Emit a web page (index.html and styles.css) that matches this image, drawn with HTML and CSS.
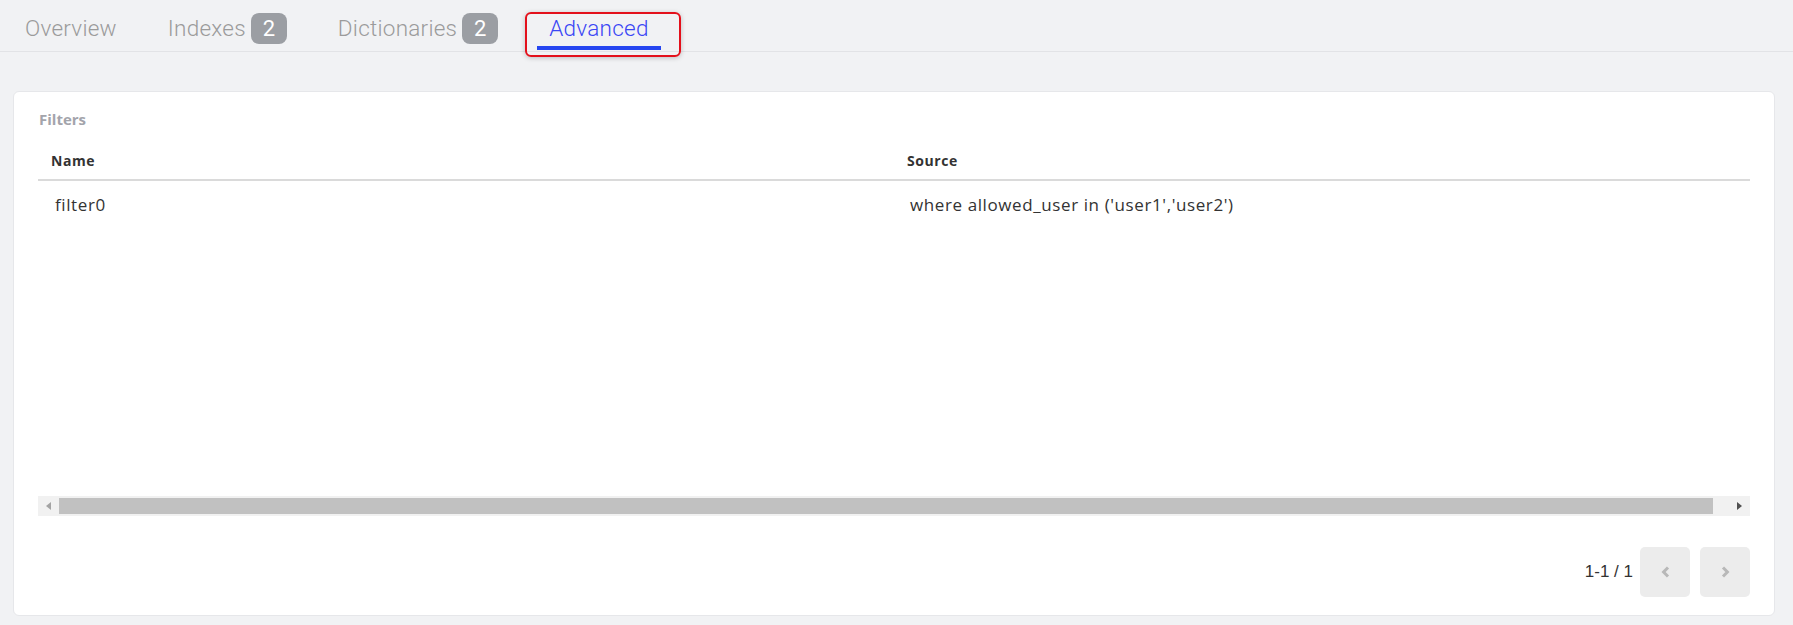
FILE: index.html
```html
<!DOCTYPE html>
<html lang="en">
<head>
<meta charset="utf-8">
<title>Advanced</title>
<link rel="stylesheet" href="styles.css">
</head>
<body>
<nav class="tabs">
  <div class="tab">Overview</div>
  <div class="tab">Indexes<span class="badge">2</span></div>
  <div class="tab">Dictionaries<span class="badge">2</span></div>
  <div class="tab active">Advanced<span class="highlight"></span></div>
</nav>
<main class="content">
  <section class="card">
    <div class="card-title">Filters</div>
    <div class="table-wrap">
      <table class="grid">
        <thead>
          <tr><th>Name</th><th>Source</th></tr>
        </thead>
        <tbody>
          <tr><td>filter0</td><td>where allowed_user in ('user1','user2')</td></tr>
        </tbody>
      </table>
    </div>
    <div class="hscroll">
      <div class="sb-btn"><span class="tri-left"></span></div>
      <div class="sb-track"><div class="sb-thumb"></div></div>
      <div class="sb-btn"><span class="tri-right"></span></div>
    </div>
    <div class="pager">
      <span class="pager-info">1-1 / 1</span>
      <button class="pager-btn" aria-label="Previous">
        <svg width="9" height="12" viewBox="0 0 9 12"><path d="M7 1.5 L2.6 6 L7 10.5" fill="none" stroke="#b8b8b8" stroke-width="3"/></svg>
      </button>
      <button class="pager-btn" aria-label="Next">
        <svg width="9" height="12" viewBox="0 0 9 12"><path d="M2 1.5 L6.4 6 L2 10.5" fill="none" stroke="#b8b8b8" stroke-width="3"/></svg>
      </button>
    </div>
  </section>
</main>
</body>
</html>
```

FILE: styles.css
```css
html, body {
  margin: 0;
  padding: 0;
  background: #f1f2f4;
  height: 100%;
  overflow: hidden;
}

body {
  font-family: "Open Sans", "Noto Sans", sans-serif;
  color: #333;
}

.tabs {
  display: flex;
  gap: 27px;
  padding: 0 0 0 13px;
  border-bottom: 1px solid #e2e3e6;
  height: 51px;
}

.tab {
  position: relative;
  display: flex;
  align-items: center;
  height: 25px;
  padding: 16px 12px 5px;
  border-bottom: 4px solid transparent;
  margin-bottom: 1px;
  font-family: Roboto, "Liberation Sans", sans-serif;
  font-weight: 300;
  font-size: 22.5px;
  letter-spacing: 0.25px;
  line-height: 25px;
  color: #9b9b9b;
  white-space: nowrap;
}

.tab.active {
  color: #3a46f5;
  border-bottom-color: #2546f0;
}

.badge {
  flex: none;
  display: flex;
  align-items: center;
  justify-content: center;
  width: 36px;
  height: 31px;
  margin-left: 5px;
  border-radius: 8px;
  background: #9b9ea3;
  color: #fff;
  font-size: 22px;
  font-weight: 400;
  letter-spacing: 0;
}

.highlight {
  position: absolute;
  left: -12px;
  right: -20px;
  top: 12px;
  bottom: -11px;
  border: 2px solid #e3101b;
  border-radius: 6px;
  box-shadow: 0 1px 5px rgba(0, 0, 0, 0.22);
  pointer-events: none;
}

.content {
  padding: 39px 18px 0 13px;
}

.card {
  background: #fff;
  border: 1px solid #e6e7ea;
  border-radius: 6px;
  padding: 19px 24px 18px;
}

.card-title {
  font-size: 15px;
  line-height: 16px;
  font-weight: 700;
  color: #a3a4ab;
  margin-left: 1px;
}

.table-wrap {
  margin-top: 13px;
  height: 356px;
  overflow: hidden;
}

.grid {
  width: 100%;
  border-collapse: collapse;
  table-layout: fixed;
}

.grid th {
  text-align: left;
  font-size: 14px;
  line-height: 20px;
  font-weight: 700;
  color: #333;
  letter-spacing: 0.55px;
  padding: 11px 12px 8px 13px;
  border-bottom: 2px solid #dadada;
}

.grid td {
  font-size: 17px;
  line-height: 20px;
  color: #333;
  letter-spacing: 0.6px;
  padding: 14px 12px 14px 16px;
  white-space: nowrap;
}

.grid td:first-child {
  padding-left: 17px;
}

.hscroll {
  display: flex;
  height: 20px;
  background: #f1f1f1;
}

.sb-btn {
  flex: none;
  width: 21px;
  display: flex;
  align-items: center;
  justify-content: center;
}

.tri-left {
  width: 0;
  height: 0;
  border-top: 4.5px solid transparent;
  border-bottom: 4.5px solid transparent;
  border-right: 5px solid #a3a3a3;
}

.tri-right {
  width: 0;
  height: 0;
  border-top: 4.5px solid transparent;
  border-bottom: 4.5px solid transparent;
  border-left: 5px solid #505050;
}

.sb-track {
  flex: 1;
  display: flex;
  padding: 2px 16px 2px 0;
}

.sb-thumb {
  flex: 1;
  background: #c1c1c1;
}

.pager {
  display: flex;
  justify-content: flex-end;
  align-items: center;
  margin-top: 31px;
  gap: 10px;
}

.pager-info {
  font-family: "Liberation Sans", Arial, sans-serif;
  font-size: 17px;
  color: #333;
  margin-right: -3px;
}

.pager-btn {
  width: 50px;
  height: 50px;
  border: none;
  border-radius: 5px;
  background: #ececec;
  display: flex;
  align-items: center;
  justify-content: center;
  padding: 0;
}
```
